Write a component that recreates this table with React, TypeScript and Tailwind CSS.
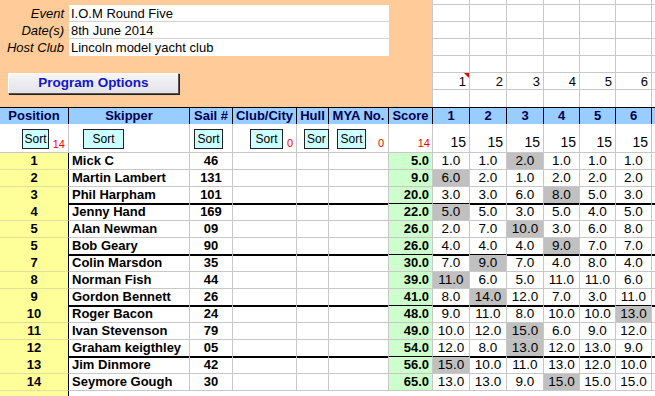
import React from 'react'

type Row = {
  pos: string
  name: string
  sail: string
  score: string
  races: string[]
  drop: number
}

const rows: Row[] = [
  { pos: '1', name: 'Mick C', sail: '46', score: '5.0', races: ['1.0', '1.0', '2.0', '1.0', '1.0', '1.0'], drop: 2 },
  { pos: '2', name: 'Martin Lambert', sail: '131', score: '9.0', races: ['6.0', '2.0', '1.0', '2.0', '2.0', '2.0'], drop: 0 },
  { pos: '3', name: 'Phil Harpham', sail: '101', score: '20.0', races: ['3.0', '3.0', '6.0', '8.0', '5.0', '3.0'], drop: 3 },
  { pos: '4', name: 'Jenny Hand', sail: '169', score: '22.0', races: ['5.0', '5.0', '3.0', '5.0', '4.0', '5.0'], drop: 0 },
  { pos: '5', name: 'Alan Newman', sail: '09', score: '26.0', races: ['2.0', '7.0', '10.0', '3.0', '6.0', '8.0'], drop: 2 },
  { pos: '5', name: 'Bob Geary', sail: '90', score: '26.0', races: ['4.0', '4.0', '4.0', '9.0', '7.0', '7.0'], drop: 3 },
  { pos: '7', name: 'Colin Marsdon', sail: '35', score: '30.0', races: ['7.0', '9.0', '7.0', '4.0', '8.0', '4.0'], drop: 1 },
  { pos: '8', name: 'Norman Fish', sail: '44', score: '39.0', races: ['11.0', '6.0', '5.0', '11.0', '11.0', '6.0'], drop: 0 },
  { pos: '9', name: 'Gordon Bennett', sail: '26', score: '41.0', races: ['8.0', '14.0', '12.0', '7.0', '3.0', '11.0'], drop: 1 },
  { pos: '10', name: 'Roger Bacon', sail: '24', score: '48.0', races: ['9.0', '11.0', '8.0', '10.0', '10.0', '13.0'], drop: 5 },
  { pos: '11', name: 'Ivan Stevenson', sail: '79', score: '49.0', races: ['10.0', '12.0', '15.0', '6.0', '9.0', '12.0'], drop: 2 },
  { pos: '12', name: 'Graham keigthley', sail: '05', score: '54.0', races: ['12.0', '8.0', '13.0', '12.0', '13.0', '9.0'], drop: 2 },
  { pos: '13', name: 'Jim Dinmore', sail: '42', score: '56.0', races: ['15.0', '10.0', '11.0', '13.0', '12.0', '10.0'], drop: 0 },
  { pos: '14', name: 'Seymore Gough', sail: '30', score: '65.0', races: ['13.0', '13.0', '9.0', '15.0', '15.0', '15.0'], drop: 3 },
]

const cols =
  'grid grid-cols-[69px_121px_43px_64px_32px_60px_44px_37px_37px_37px_36px_36px_36px_1fr]'

function SortButton({ className, label = 'Sort' }: { className: string; label?: string }) {
  return (
    <div
      className={`mt-[5px] h-[20px] overflow-hidden whitespace-nowrap border border-[#222] bg-[#ccffff] text-[12px] leading-[18px] ${className}`}
    >
      {label}
    </div>
  )
}

export default function App() {
  return (
    <div className="h-[396px] w-[655px] overflow-hidden bg-white text-black [font-family:'Liberation_Sans',Arial,sans-serif]">
      {/* event details */}
      <div className="flex h-[107px]">
        <div className="w-[434px] border-r border-[#c8c8c8] bg-[#ffcc99] pt-[5px]">
          {[
            ['Event', 'I.O.M Round Five'],
            ['Date(s)', '8th June 2014'],
            ['Host Club', 'Lincoln model yacht club'],
          ].map(([label, value], i) => (
            <div key={label} className="flex h-[17px]">
              <div className="w-[69px] pr-[5px] text-right text-[13px] italic leading-[17px]">{label}</div>
              <div
                className={`w-[320px] bg-white pl-[2px] text-[13px] leading-[17px] ${i < 2 ? 'border-b border-[#d4d4d4]' : ''}`}
              >
                {value}
              </div>
            </div>
          ))}
          <div className="ml-[8px] mt-[17px] flex h-[21px] w-[171px] items-center justify-center border border-b-[#555] border-l-white border-r-[#555] border-t-white bg-gradient-to-b from-[#f6f6f8] to-[#e2e2e8] text-[13.5px] font-bold text-[#1414c8] shadow-[1px_1px_0_#222]">
            Program Options
          </div>
        </div>
        <div className="grid flex-1 grid-cols-[37px_37px_37px_36px_36px_36px_1fr] grid-rows-[5px_17px_17px_17px_17px_17px_17px]">
          {Array.from({ length: 7 * 7 }).map((_, k) => {
            const r = Math.floor(k / 7)
            const c = k % 7
            const num = r === 5 && c < 6 ? String(c + 1) : ''
            return (
              <div
                key={k}
                className={`relative ${c < 6 ? 'border-r' : ''} ${r < 6 ? 'border-b' : ''} border-[#c8c8c8] pr-[3px] text-right text-[13px] leading-[18px]`}
              >
                {num}
                {r === 5 && c === 0 && (
                  <span className="absolute right-0 top-0 h-0 w-0 border-l-[5px] border-t-[5px] border-l-transparent border-t-[#e00000]" />
                )}
              </div>
            )
          })}
        </div>
      </div>

      {/* header */}
      <div className={`${cols} h-[17px] border-t border-black bg-[#99ccff] text-[13px] font-bold leading-[16px] text-[#000050]`}>
        {['Position', 'Skipper', 'Sail #', 'Club/City', 'Hull', 'MYA No.', 'Score', '1', '2', '3', '4', '5', '6', ''].map(
          (h, i) => (
            <div key={i} className={`overflow-hidden whitespace-nowrap text-center ${i < 13 ? 'border-r border-black' : ''}`}>
              {h}
            </div>
          ),
        )}
      </div>

      {/* sort row */}
      <div className={`${cols} h-[29px] border-b border-[#c8c8c8]`}>
        <div className="relative border-r border-[#c8c8c8]">
          <SortButton className="ml-[22px] w-[27px] text-center" />
          <span className="absolute bottom-[2px] right-[3px] text-[11px] leading-none text-[#ee0000]">14</span>
        </div>
        <div className="border-r border-[#c8c8c8]">
          <SortButton className="ml-[14px] w-[41px] text-center" />
        </div>
        <div className="border-r border-[#c8c8c8]">
          <SortButton className="ml-[4px] w-[29px] text-center" />
        </div>
        <div className="relative border-r border-[#c8c8c8]">
          <SortButton className="ml-[17px] w-[33px] text-center" />
          <span className="absolute bottom-[3px] right-[3px] text-[11px] leading-none text-[#ee0000]">0</span>
        </div>
        <div className="border-r border-[#c8c8c8]">
          <SortButton className="ml-[7px] w-[25px] pl-[2px]" label="Sor" />
        </div>
        <div className="relative border-r border-[#c8c8c8]">
          <SortButton className="ml-[8px] w-[29px] text-center" />
          <span className="absolute bottom-[3px] right-[4px] text-[11px] leading-none text-[#ee0000]">0</span>
        </div>
        <div className="relative border-r border-[#c8c8c8]">
          <span className="absolute bottom-[3px] right-[2px] text-[11px] leading-none text-[#ee0000]">14</span>
        </div>
        {Array.from({ length: 6 }).map((_, i) => (
          <div key={i} className="flex items-end justify-end border-r border-[#c8c8c8] pb-[2px] pr-[3px] text-[14px] leading-[16px]">
            15
          </div>
        ))}
        <div />
      </div>

      {/* results */}
      {rows.map((r, i) => {
        const thick = i === 2 || i === 5 || i === 8 || i === 11
        const bottom = thick ? 'border-b-2 border-b-black' : 'border-b border-b-[#c8c8c8]'
        return (
          <div key={i} className={`${cols} h-[17px] text-[13px] leading-[16px]`}>
            <div className="border-b border-r border-b-[#e0e0a0] border-r-black bg-[#ffff99] text-center font-bold">{r.pos}</div>
            <div className={`${bottom} overflow-hidden whitespace-nowrap border-r border-r-[#c8c8c8] pl-[3px] font-bold`}>{r.name}</div>
            <div className={`${bottom} border-r border-r-[#c8c8c8] text-center font-bold`}>{r.sail}</div>
            <div className={`${bottom} border-r border-r-[#c8c8c8]`} />
            <div className={`${bottom} border-r border-r-[#c8c8c8]`} />
            <div className={`${bottom} border-r border-r-[#c8c8c8]`} />
            <div className={`${bottom} border-r border-r-[#c8c8c8] bg-[#ccffcc] pr-[3px] text-right font-bold`}>{r.score}</div>
            {r.races.map((v, j) => (
              <div
                key={j}
                className={`${bottom} border-r border-r-[#c8c8c8] text-center text-[13.5px] ${j === r.drop ? 'bg-[#c0c0c0]' : ''}`}
              >
                {v}
              </div>
            ))}
            <div className={bottom} />
          </div>
        )
      })}
      <div className={`${cols} h-[17px]`}>
        <div className="border-r border-black bg-[#ffff99]" />
      </div>
    </div>
  )
}
